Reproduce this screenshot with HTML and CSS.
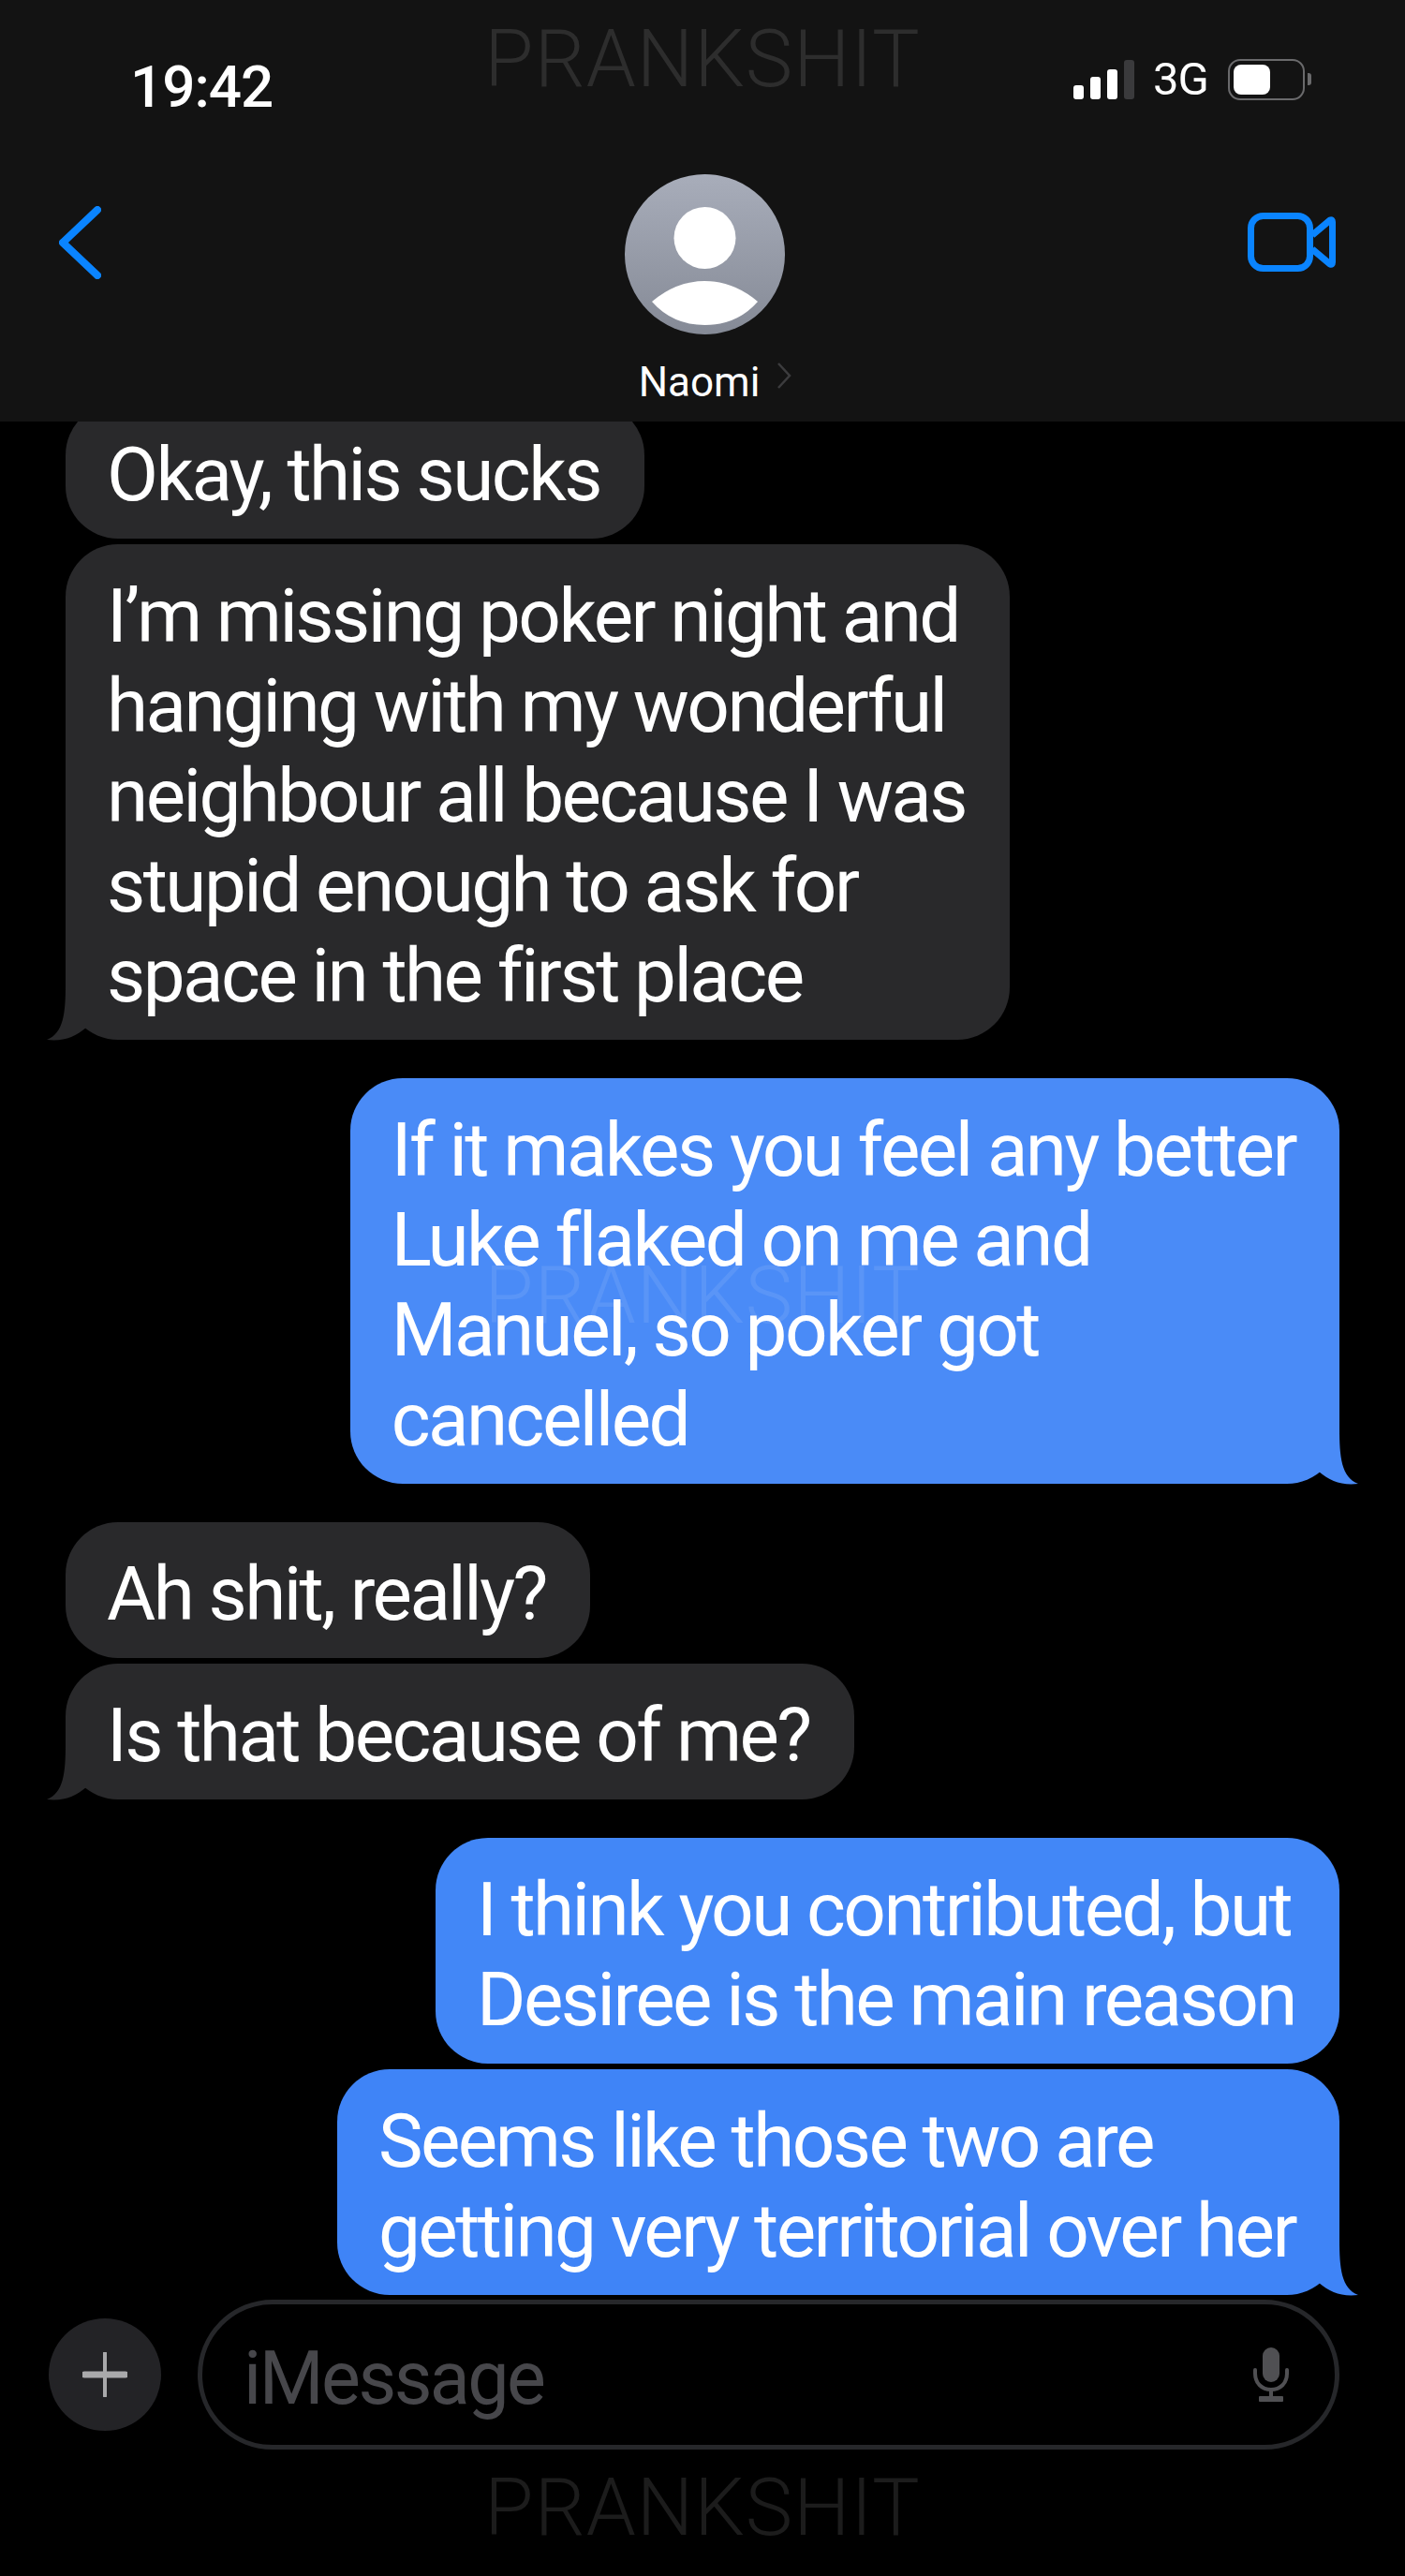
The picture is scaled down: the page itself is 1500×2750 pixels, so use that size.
FILE: index.html
```html
<!DOCTYPE html>
<html>

<head>
    <title>Naomi</title>
    <link rel="stylesheet" href="styles.css">
</head>

<body>
    <div class="phone">
        <div class="topbar">
            <div class="status">
                <span class="clock">19:42</span>
                <div class="status-right">
                    <div class="signal"><i class="b1"></i><i class="b2"></i><i class="b3"></i><i class="b4"></i></div>
                    <span class="net">3G</span>
                    <div class="battery"><div class="battery-fill"></div></div>
                    <div class="battery-nub"></div>
                </div>
            </div>
            <div class="nav">
                <svg class="back" width="45" height="78" viewBox="0 0 45 78"><path d="M41 4 L4 39 L41 74" fill="none" stroke="#0a84ff" stroke-width="8" stroke-linecap="round" stroke-linejoin="round"/></svg>
                <div class="contact">
                    <svg class="avatar" width="171" height="171" viewBox="0 0 171 171">
                        <defs>
                            <linearGradient id="avatarGrad" x1="0" y1="0" x2="0" y2="1">
                                <stop offset="0" stop-color="#a8adba"/>
                                <stop offset="1" stop-color="#858a96"/>
                            </linearGradient>
                        </defs>
                        <circle cx="85.5" cy="85.5" r="85.5" fill="url(#avatarGrad)"/>
                        <ellipse cx="85.5" cy="68" rx="33" ry="33" fill="#fff"/>
                        <path d="M29 136 Q55 114 85.5 114 Q116 114 142 136 Q120 161 85.5 161 Q51 161 29 136 Z" fill="#fff"/>
                    </svg>
                    <div class="contact-name">
                        <span>Naomi</span>
                        <svg class="name-arrow" width="16" height="28" viewBox="0 0 16 28"><path d="M2 1 L14 14 L2 27" fill="none" stroke="#3c3c3e" stroke-width="2.5"/></svg>
                    </div>
                </div>
                <svg class="video" width="94" height="63" viewBox="0 0 94 63">
                    <rect x="3.5" y="3.5" width="63" height="56" rx="13" fill="none" stroke="#0a84ff" stroke-width="7"/>
                    <path d="M69 24 L88 8 Q90.500 7 90.500 10 L90.500 53 Q90.500 56 88 55 L69 39" fill="none" stroke="#0a84ff" stroke-width="7" stroke-linejoin="round"/>
                </svg>
            </div>
        </div>

        <div class="messages">
            <div class="msg them first">Okay, this sucks</div>
            <div class="msg them">I’m missing poker night and<br>hanging with my wonderful<br>neighbour all because I was<br>stupid enough to ask for<br>space in the first place
                <svg class="tail tail-them" width="50" height="60" viewBox="0 0 50 60"><path d="M20 0 C20 30 18 52 0 59 C18 61 30 56 42 46 L50 52 L50 0 Z"/></svg>
            </div>

            <div class="msg me me-light gap">If it makes you feel any better<br>Luke flaked on me and<br>Manuel, so poker got<br>cancelled
                <svg class="tail tail-me" width="50" height="60" viewBox="0 0 50 60"><path d="M30 0 C30 30 32 52 50 59 C32 61 20 56 8 46 L0 52 L0 0 Z"/></svg>
            </div>

            <div class="msg them gap">Ah shit, really?</div>
            <div class="msg them">Is that because of me?
                <svg class="tail tail-them" width="50" height="60" viewBox="0 0 50 60"><path d="M20 0 C20 30 18 52 0 59 C18 61 30 56 42 46 L50 52 L50 0 Z"/></svg>
            </div>

            <div class="msg me me-mid gap">I think you contributed, but<br>Desiree is the main reason</div>
            <div class="msg me me-dark">Seems like those two are<br>getting very territorial over her
                <svg class="tail tail-me" width="50" height="60" viewBox="0 0 50 60"><path d="M30 0 C30 30 32 52 50 59 C32 61 20 56 8 46 L0 52 L0 0 Z"/></svg>
            </div>
        </div>

        <div class="composer">
            <div class="plus">
                <svg width="48" height="48" viewBox="0 0 48 48"><path d="M24 1 V47" stroke="#a9a9ab" stroke-width="4" stroke-linecap="round"/><path d="M2 24 H46" stroke="#a9a9ab" stroke-width="7" stroke-linecap="round"/></svg>
            </div>
            <div class="inputbox">
                <span class="placeholder">iMessage</span>
                <svg class="mic" width="40" height="58" viewBox="0 0 40 58">
                    <rect x="11" y="0" width="18" height="37" rx="9" fill="#505053"/>
                    <path d="M3 24 V28 C3 38 10 45 20 45 C30 45 37 38 37 28 V24" fill="none" stroke="#505053" stroke-width="4" stroke-linecap="round"/>
                    <path d="M20 45 V53" stroke="#505053" stroke-width="4"/>
                    <rect x="7" y="52" width="26" height="6" rx="1" fill="#505053"/>
                </svg>
            </div>
        </div>

        <div class="mark mark-top">PRANKSHIT</div>
        <div class="mark mark-mid">PRANKSHIT</div>
        <div class="mark mark-bottom">PRANKSHIT</div>
    </div>
</body>
</html>
```
FILE: styles.css
```css
* {
  box-sizing: border-box;
}

body {
  margin: 0;
  background-color: #000;
  font-family: "Roboto", "Liberation Sans", sans-serif;
  color: #fff;
}

.phone {
  position: relative;
  width: 1500px;
  height: 2750px;
  overflow: hidden;
}

.topbar {
  height: 450px;
  background-color: #131313;
  padding: 0 74px 0 63px;
}

.status {
  height: 186px;
  display: flex;
  justify-content: space-between;
  padding: 59px 0 0 76px;
}

.clock {
  font-size: 62px;
  font-weight: 500;
  line-height: 68px;
  letter-spacing: -1px;
}

.status-right {
  display: flex;
  align-items: flex-start;
  margin-right: 26px;
  padding-top: 4px;
}

.signal {
  display: flex;
  align-items: flex-end;
  gap: 7px;
  height: 43px;
}

.signal i {
  display: block;
  width: 11px;
  border-radius: 3px;
  background-color: #fff;
}

.signal .b1 { height: 15px; }
.signal .b2 { height: 24px; }
.signal .b3 { height: 32px; }
.signal .b4 { height: 42px; background-color: #3a3a3c; }

.net {
  margin-left: 20px;
  font-size: 49px;
  line-height: 44px;
  letter-spacing: -1px;
}

.battery {
  margin-left: 21px;
  width: 82px;
  height: 44px;
  padding: 4px;
  border: 2px solid #6a6a6c;
  border-radius: 13px;
}

.battery-fill {
  width: 39px;
  height: 100%;
  background-color: #fff;
  border-radius: 8px;
}

.battery-nub {
  width: 4px;
  height: 13px;
  margin: 15px 0 0 3px;
  background-color: #6a6a6c;
  border-radius: 0 3px 3px 0;
}

.nav {
  display: grid;
  grid-template-columns: 1fr auto 1fr;
  align-items: start;
}

.back {
  margin-top: 34px;
}

.video {
  justify-self: end;
  margin-top: 41px;
}

.contact {
  display: flex;
  flex-direction: column;
  align-items: center;
  margin-left: 16px;
}

.avatar {
  display: block;
}

.contact-name {
  position: relative;
  margin-top: 26px;
  margin-right: 12px;
  font-size: 44px;
  line-height: 50px;
}

.name-arrow {
  position: absolute;
  left: 100%;
  top: 4px;
  margin-left: 18px;
}

.messages {
  height: 2005px;
  overflow: hidden;
  display: flex;
  flex-direction: column;
  padding: 0 70px;
}

.msg {
  position: relative;
  flex: none;
  width: max-content;
  margin-top: 6px;
  padding: 29px 47px 20px 44px;
  border-radius: 56px;
  font-size: 80px;
  line-height: 96px;
  letter-spacing: -2.55px;
  white-space: nowrap;
}

.msg.first {
  margin-top: -20px;
}

.msg.gap {
  margin-top: 41px;
}

.them {
  align-self: flex-start;
  background-color: #29292b;
  fill: #29292b;
}

.me {
  align-self: flex-end;
}

/* blue drifts a little darker down the thread */
.me-light {
  background-color: #4a8bf7;
  fill: #4a8bf7;
}

.me-mid {
  background-color: #4287f7;
  fill: #4287f7;
}

.me-dark {
  background-color: #3f84f7;
  fill: #3f84f7;
}

.tail {
  position: absolute;
  bottom: -1px;
}

.tail-them {
  left: -20px;
}

.tail-me {
  right: -20px;
}

.composer {
  display: flex;
  align-items: center;
  height: 160px;
  padding-left: 52px;
}

.plus {
  display: flex;
  align-items: center;
  justify-content: center;
  width: 120px;
  height: 120px;
  border-radius: 50%;
  background-color: #232326;
}

.inputbox {
  display: flex;
  align-items: center;
  justify-content: space-between;
  width: 1219px;
  height: 160px;
  margin-left: 39px;
  padding: 0 48px 0 44px;
  border: 5px solid #26272a;
  border-radius: 80px;
}

.placeholder {
  padding-top: 8px;
  font-size: 79px;
  line-height: 96px;
  letter-spacing: -2.55px;
  color: #47474b;
}

.mark {
  position: absolute;
  left: 0;
  width: 100%;
  text-align: center;
  font-size: 85px;
  font-weight: 300;
  line-height: 100px;
  letter-spacing: 1px;
  pointer-events: none;
}

.mark-top {
  top: 13px;
  color: #2d2d2d;
}

.mark-mid {
  top: 1333px;
  color: rgba(255, 255, 255, 0.09);
}

.mark-bottom {
  top: 2627px;
  color: #1c1c1c;
}
```
